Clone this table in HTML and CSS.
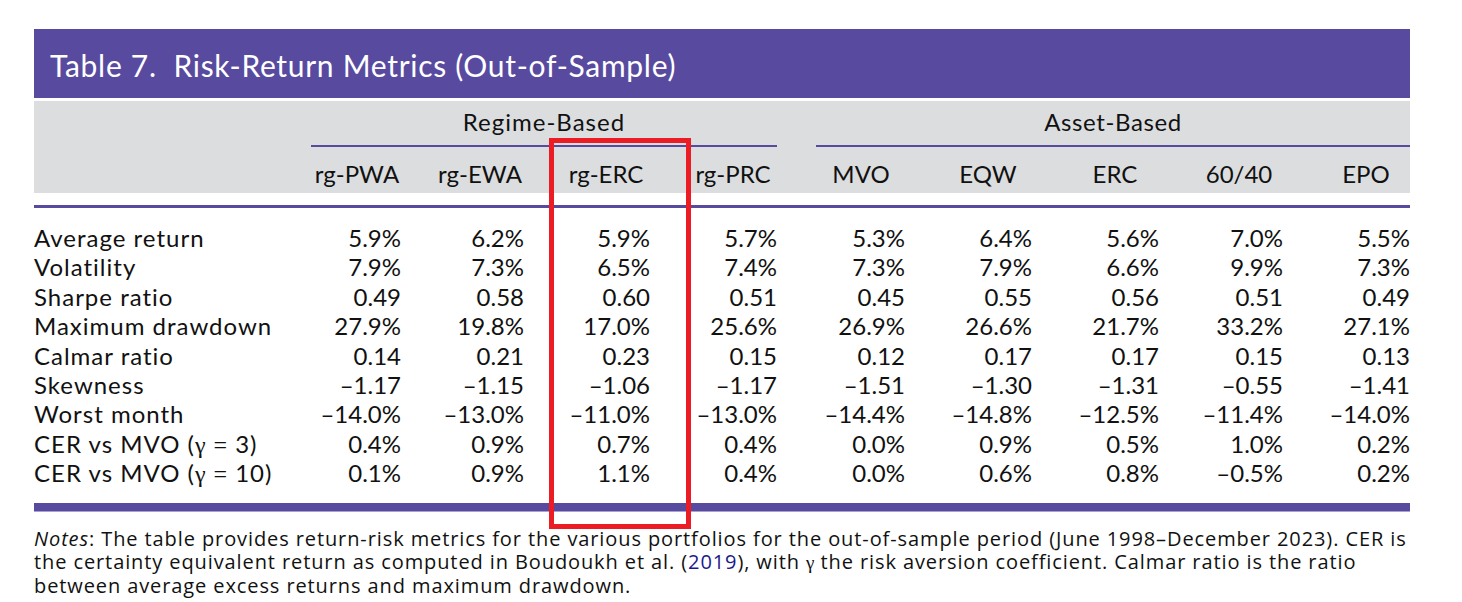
FILE: index.html
```html
<!DOCTYPE html>
<html lang="en">
<head>
<meta charset="utf-8">
<title>Table 7. Risk-Return Metrics (Out-of-Sample)</title>
<link rel="stylesheet" href="styles.css">
</head>
<body>
<div class="page">
  <div class="title">Table 7.&nbsp; Risk-Return Metrics (Out-of-Sample)</div>

  <div class="head grid">
    <div class="group regime">Regime-Based</div>
    <div class="group asset">Asset-Based</div>
    <div class="hcell label"></div>
    <div class="hcell"><span>rg-PWA</span></div>
    <div class="hcell"><span>rg-EWA</span></div>
    <div class="hcell"><span>rg-ERC</span></div>
    <div class="hcell"><span>rg-PRC</span></div>
    <div class="hcell"><span>MVO</span></div>
    <div class="hcell"><span>EQW</span></div>
    <div class="hcell"><span>ERC</span></div>
    <div class="hcell"><span>60/40</span></div>
    <div class="hcell"><span>EPO</span></div>
  </div>

  <div class="rule-top"></div>

  <div class="body grid">
    <div class="label">Average return</div>
    <div>5.9%</div><div>6.2%</div><div>5.9%</div><div>5.7%</div><div>5.3%</div><div>6.4%</div><div>5.6%</div><div>7.0%</div><div>5.5%</div>

    <div class="label">Volatility</div>
    <div>7.9%</div><div>7.3%</div><div>6.5%</div><div>7.4%</div><div>7.3%</div><div>7.9%</div><div>6.6%</div><div>9.9%</div><div>7.3%</div>

    <div class="label">Sharpe ratio</div>
    <div>0.49</div><div>0.58</div><div>0.60</div><div>0.51</div><div>0.45</div><div>0.55</div><div>0.56</div><div>0.51</div><div>0.49</div>

    <div class="label">Maximum drawdown</div>
    <div>27.9%</div><div>19.8%</div><div>17.0%</div><div>25.6%</div><div>26.9%</div><div>26.6%</div><div>21.7%</div><div>33.2%</div><div>27.1%</div>

    <div class="label">Calmar ratio</div>
    <div>0.14</div><div>0.21</div><div>0.23</div><div>0.15</div><div>0.12</div><div>0.17</div><div>0.17</div><div>0.15</div><div>0.13</div>

    <div class="label">Skewness</div>
    <div>–1.17</div><div>–1.15</div><div>–1.06</div><div>–1.17</div><div>–1.51</div><div>–1.30</div><div>–1.31</div><div>–0.55</div><div>–1.41</div>

    <div class="label">Worst month</div>
    <div>–14.0%</div><div>–13.0%</div><div>–11.0%</div><div>–13.0%</div><div>–14.4%</div><div>–14.8%</div><div>–12.5%</div><div>–11.4%</div><div>–14.0%</div>

    <div class="label">CER vs MVO (<span class="math">γ</span><span class="eq">=</span>3)</div>
    <div>0.4%</div><div>0.9%</div><div>0.7%</div><div>0.4%</div><div>0.0%</div><div>0.9%</div><div>0.5%</div><div>1.0%</div><div>0.2%</div>

    <div class="label">CER vs MVO (<span class="math">γ</span><span class="eq">=</span>10)</div>
    <div>0.1%</div><div>0.9%</div><div>1.1%</div><div>0.4%</div><div>0.0%</div><div>0.6%</div><div>0.8%</div><div>–0.5%</div><div>0.2%</div>
  </div>

  <div class="rule-bottom"></div>

  <p class="notes"><em>Notes</em>: The table provides return-risk metrics for the various portfolios for the out-of-sample period (June 1998–December 2023). CER is<br>the certainty equivalent return as computed in Boudoukh et al. (<a class="ref" href="#">2019</a>), with <span class="math">γ</span> the risk aversion coefficient. Calmar ratio is the ratio<br>between average excess returns and maximum drawdown.</p>

  <div class="highlight"></div>
</div>
</body>
</html>
```

FILE: styles.css
```css
* { box-sizing: border-box; }

html, body {
  margin: 0;
  padding: 0;
  background: #ffffff;
}

.page {
  position: relative;
  width: 1462px;
  height: 602px;
  padding: 29px 52px 0 34px;
  font-family: Lato, "Open Sans", sans-serif;
  color: #111111;
  overflow: hidden;
}

.title {
  width: 1376px;
  height: 69px;
  padding: 4px 0 0 16px;
  line-height: 65px;
  font-size: 30px;
  letter-spacing: 0.7px;
  color: #ffffff;
  background: #584b9f;
  white-space: pre;
}

.grid {
  display: grid;
  grid-template-columns: 277px 90px 123px 126px 127px 128px 127px 127px 124px 127px;
  width: 1376px;
  font-size: 24px;
}

.head {
  margin-top: 3px;
  height: 92px;
  padding-top: 6px;
  background: #dcdddf;
  grid-template-rows: 40px 41px;
}

.group {
  grid-row: 1;
  text-align: center;
  line-height: 29px;
  border-bottom: 2px solid #584b9f;
}

.regime {
  grid-column: 2 / 6;
  letter-spacing: 1px;
}

.asset {
  grid-column: 6 / 11;
  margin-left: 39px;
  letter-spacing: 0.6px;
}

.hcell {
  grid-row: 2;
  display: flex;
  justify-content: flex-end;
  align-items: flex-end;
  line-height: 29px;
}

.hcell span {
  width: 88px;
  text-align: center;
  white-space: nowrap;
}

.rule-top {
  width: 1376px;
  height: 3px;
  margin-top: 12px;
  background: #584b9f;
}

.body {
  padding-top: 15px;
  grid-auto-rows: 29.4px;
  line-height: 29.4px;
}

.body > div {
  text-align: right;
  white-space: nowrap;
}

.body > .label {
  text-align: left;
  letter-spacing: 1px;
}

.math {
  font-family: "Liberation Serif", "DejaVu Serif", serif;
  font-size: 1.0em;
  letter-spacing: 0;
}

.eq {
  font-family: "Liberation Serif", "DejaVu Serif", serif;
  padding: 0 8px;
  letter-spacing: 0;
}

.rule-bottom {
  width: 1376px;
  height: 9px;
  margin-top: 15px;
  background: #584b9f;
  border-bottom: 1px solid #a8a2d0;
}

.notes {
  width: 1400px;
  margin: 15px 0 0 0;
  font-family: "Open Sans", sans-serif;
  font-size: 20px;
  letter-spacing: 0.9px;
  line-height: 23px;
  color: #111111;
  white-space: nowrap;
}

.notes .math {
  font-size: 0.95em;
}

.ref {
  color: #1b1a8a;
  text-decoration: none;
}

.highlight {
  position: absolute;
  left: 549px;
  top: 138px;
  width: 142px;
  height: 391px;
  border: 5px solid #ec1c24;
  pointer-events: none;
}
```
